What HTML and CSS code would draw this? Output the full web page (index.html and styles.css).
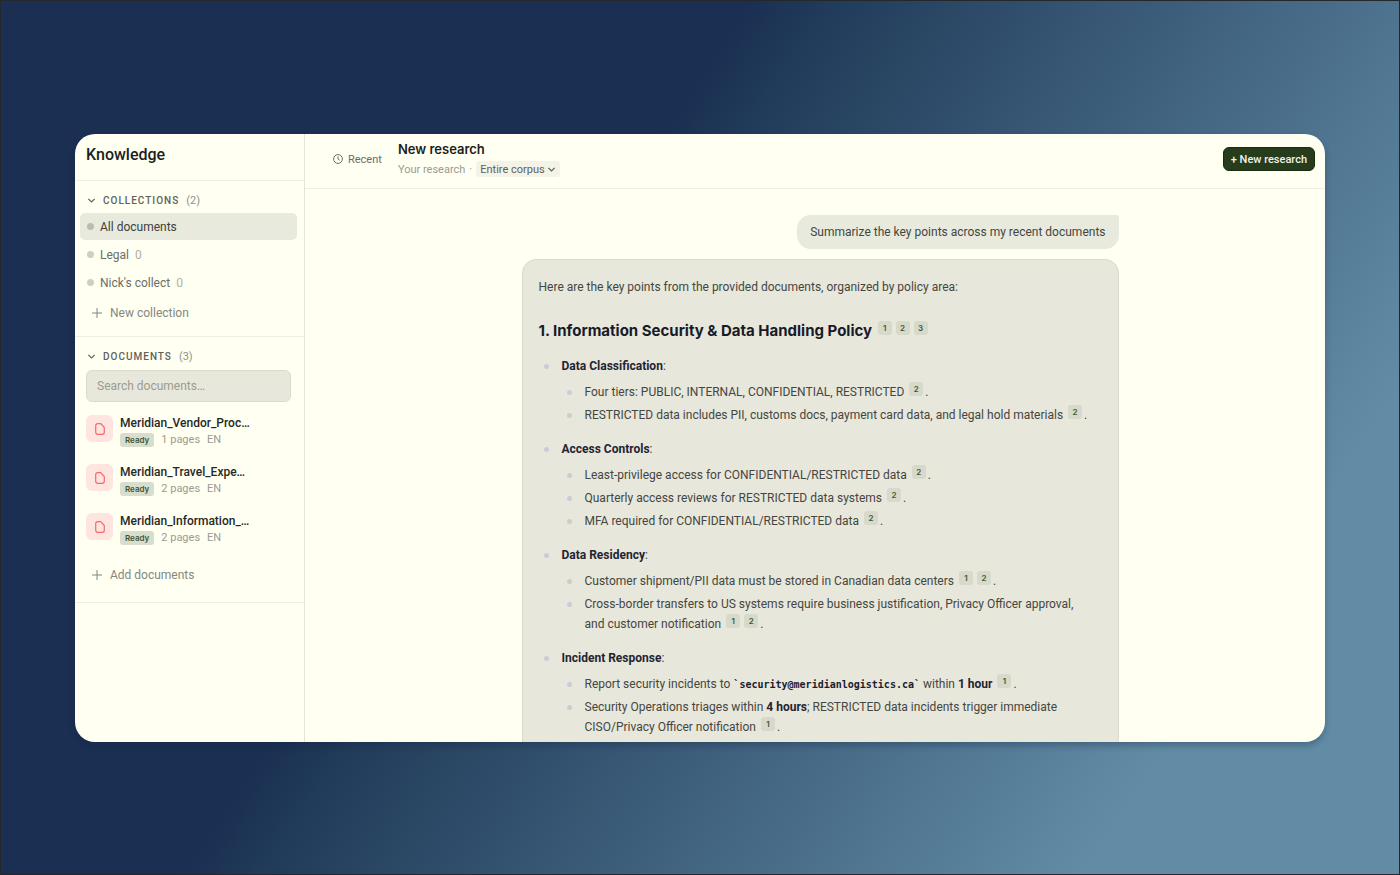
FILE: index.html
```html
<!DOCTYPE html>
<html lang="en">
<head>
    <meta charset="UTF-8">
    <meta name="viewport" content="width=device-width, initial-scale=1.0">
    <title>Knowledge</title>
    <link rel="stylesheet" href="styles.css">
</head>
<body>
    <div class="window">
        <aside class="sidebar">
            <div class="sidebar-header">
                <h1>Knowledge</h1>
            </div>

            <section class="section">
                <button class="section-toggle">
                    <svg class="chevron" viewBox="0 0 10 10"><path d="M1.5 3.2 5 6.7l3.5-3.5"/></svg>
                    <span class="section-title">COLLECTIONS</span>
                    <span class="section-count">(2)</span>
                </button>
                <nav class="collections">
                    <a href="#" class="collection active"><span class="dot"></span>All documents</a>
                    <a href="#" class="collection"><span class="dot"></span>Legal <span class="count">0</span></a>
                    <a href="#" class="collection"><span class="dot"></span>Nick's collect <span class="count">0</span></a>
                </nav>
                <button class="add-button">
                    <svg class="plus" viewBox="0 0 10 10"><path d="M5 0v10M0 5h10"/></svg>
                    New collection
                </button>
            </section>

            <section class="section">
                <button class="section-toggle">
                    <svg class="chevron" viewBox="0 0 10 10"><path d="M1.5 3.2 5 6.7l3.5-3.5"/></svg>
                    <span class="section-title">DOCUMENTS</span>
                    <span class="section-count">(3)</span>
                </button>
                <input class="search" type="text" placeholder="Search documents…" aria-label="Search documents">
                <ul class="documents">
                    <li class="document">
                        <span class="doc-icon"><svg viewBox="0 0 10 12"><path d="M2.7.7h3l3.6 3.8v4.8a2 2 0 0 1-2 2H2.7a2 2 0 0 1-2-2V2.7a2 2 0 0 1 2-2z"/></svg></span>
                        <div class="doc-info">
                            <div class="doc-name">Meridian_Vendor_Proc…</div>
                            <div class="doc-meta"><span class="ready">Ready</span><span>1 pages</span><span>EN</span></div>
                        </div>
                    </li>
                    <li class="document">
                        <span class="doc-icon"><svg viewBox="0 0 10 12"><path d="M2.7.7h3l3.6 3.8v4.8a2 2 0 0 1-2 2H2.7a2 2 0 0 1-2-2V2.7a2 2 0 0 1 2-2z"/></svg></span>
                        <div class="doc-info">
                            <div class="doc-name">Meridian_Travel_Expe…</div>
                            <div class="doc-meta"><span class="ready">Ready</span><span>2 pages</span><span>EN</span></div>
                        </div>
                    </li>
                    <li class="document">
                        <span class="doc-icon"><svg viewBox="0 0 10 12"><path d="M2.7.7h3l3.6 3.8v4.8a2 2 0 0 1-2 2H2.7a2 2 0 0 1-2-2V2.7a2 2 0 0 1 2-2z"/></svg></span>
                        <div class="doc-info">
                            <div class="doc-name">Meridian_Information_…</div>
                            <div class="doc-meta"><span class="ready">Ready</span><span>2 pages</span><span>EN</span></div>
                        </div>
                    </li>
                </ul>
                <button class="add-button">
                    <svg class="plus" viewBox="0 0 10 10"><path d="M5 0v10M0 5h10"/></svg>
                    Add documents
                </button>
            </section>
        </aside>

        <main class="main">
            <header class="topbar">
                <button class="recent">
                    <svg viewBox="0 0 10 10"><circle cx="5" cy="5" r="4.4"/><path d="M5 2.4V5l1.6 1.2"/></svg>
                    Recent
                </button>
                <div class="heading">
                    <h2>New research</h2>
                    <div class="scope">
                        <span>Your research</span>
                        <span>·</span>
                        <span class="scope-select">
                            <select aria-label="Research scope">
                                <option>Entire corpus</option>
                            </select>
                            <svg class="chevron" viewBox="0 0 10 10"><path d="M1.5 3.2 5 6.7l3.5-3.5"/></svg>
                        </span>
                    </div>
                </div>
                <button class="new-research">+ New research</button>
            </header>

            <div class="chat">
                <div class="thread">
                    <div class="question">Summarize the key points across my recent documents</div>
                    <article class="answer">
                        <p>Here are the key points from the provided documents, organized by policy area:</p>
                        <h3>1. Information Security &amp; Data Handling Policy <button class="cite">1</button><button class="cite">2</button><button class="cite">3</button></h3>
                        <ul class="points">
                            <li><strong>Data Classification</strong>:
                                <ul>
                                    <li>Four tiers: PUBLIC, INTERNAL, CONFIDENTIAL, RESTRICTED <button class="cite">2</button>.</li>
                                    <li>RESTRICTED data includes PII, customs docs, payment card data, and legal hold materials <button class="cite">2</button>.</li>
                                </ul>
                            </li>
                            <li><strong>Access Controls</strong>:
                                <ul>
                                    <li>Least-privilege access for CONFIDENTIAL/RESTRICTED data <button class="cite">2</button>.</li>
                                    <li>Quarterly access reviews for RESTRICTED data systems <button class="cite">2</button>.</li>
                                    <li>MFA required for CONFIDENTIAL/RESTRICTED data <button class="cite">2</button>.</li>
                                </ul>
                            </li>
                            <li><strong>Data Residency</strong>:
                                <ul>
                                    <li>Customer shipment/PII data must be stored in Canadian data centers <button class="cite">1</button><button class="cite">2</button>.</li>
                                    <li>Cross-border transfers to US systems require business justification, Privacy Officer approval, and customer notification <button class="cite">1</button><button class="cite">2</button>.</li>
                                </ul>
                            </li>
                            <li><strong>Incident Response</strong>:
                                <ul>
                                    <li>Report security incidents to <code>`security@meridianlogistics.ca`</code> within <strong>1 hour</strong> <button class="cite">1</button>.</li>
                                    <li>Security Operations triages within <strong>4 hours</strong>; RESTRICTED data incidents trigger immediate CISO/Privacy Officer notification <button class="cite">1</button>.</li>
                                </ul>
                            </li>
                        </ul>
                    </article>
                </div>
            </div>
        </main>
    </div>
</body>
</html>
```
FILE: styles.css
```css
* {
    box-sizing: border-box;
}
body {
    margin: 0;
    height: 100vh;
    padding: 133px 74px 132px;
    border: 1px solid #24282c;
    background: linear-gradient(123deg, #1a2f52 0%, #1a2f52 38%, #223d5b 43%, #628ca6 84%, #628ca6 100%);
    font-family: Roboto, "Liberation Sans", sans-serif;
    font-size: 12px;
    color: #444641;
}
h1, h2, h3, p, ul {
    margin: 0;
    padding: 0;
}
ul {
    list-style: none;
}
button, input, select {
    font: inherit;
    color: inherit;
    border: none;
    background: none;
    padding: 0;
}
button, select {
    cursor: pointer;
}
svg {
    fill: none;
    stroke: currentColor;
    flex-shrink: 0;
}
.window {
    display: flex;
    height: 100%;
    overflow: hidden;
    background: #fffff2;
    border-radius: 20px;
    box-shadow: 0 4px 6px rgba(20, 35, 60, 0.3);
}

/* Sidebar */
.sidebar {
    width: 230px;
    flex-shrink: 0;
    border-right: 1px solid #e4e5d9;
}
.sidebar-header {
    height: 47px;
    padding: 11px;
    border-bottom: 1px solid #eeeee2;
}
h1 {
    font-size: 16px;
    line-height: 20px;
    font-weight: 500;
    color: #1c1e1b;
}
.section {
    padding: 11px 7px 12px 5px;
    border-bottom: 1px solid #eeeee2;
}
.section:last-child {
    padding-bottom: 16px;
}
.section-toggle {
    display: flex;
    align-items: center;
    gap: 7px;
    height: 16px;
    padding: 0 7px;
    font-size: 10px;
    color: #5f625b;
}
.section-title {
    font-weight: 500;
    letter-spacing: 1px;
}
.section-count {
    color: #90938a;
    font-size: 11px;
}
.chevron {
    width: 9px;
    height: 9px;
    stroke-width: 1.3;
}
.collections {
    display: grid;
    gap: 1px;
    margin-top: 5px;
}
.collection {
    display: flex;
    align-items: center;
    gap: 6px;
    height: 27px;
    padding: 0 7px;
    border-radius: 5px;
    color: #6b6e67;
    text-decoration: none;
}
.collection.active {
    background: #e8eadd;
    color: #3c3f3a;
}
.dot {
    width: 7px;
    height: 7px;
    border-radius: 50%;
    background: #cdcfc4;
}
.active .dot {
    background: #b9bcb0;
}
.count {
    color: #adafa5;
}
.add-button {
    display: flex;
    align-items: center;
    gap: 8px;
    height: 22px;
    margin-top: 6px;
    padding: 0 12px;
    color: #85887f;
}
.plus {
    width: 10px;
    height: 10px;
    stroke-width: 1;
}
.search {
    display: block;
    width: calc(100% - 12px);
    height: 32px;
    margin: 6px 6px 0;
    padding: 0 10px;
    border: 1px solid #dadbcd;
    border-radius: 6px;
    background: #e8e7db;
}
.search::placeholder {
    color: #9a9c92;
}
.documents {
    display: grid;
    gap: 17px;
    margin: 13px 6px 19px;
}
.document {
    display: flex;
    gap: 7px;
}
.doc-icon {
    display: flex;
    align-items: center;
    justify-content: center;
    width: 27px;
    height: 27px;
    border-radius: 6px;
    background: #fee5df;
    color: #f9686d;
}
.doc-icon svg {
    width: 10px;
    height: 12px;
    stroke-width: 1.2;
}
.doc-name {
    line-height: 17px;
    font-weight: 500;
    color: #272926;
}
.doc-meta {
    display: flex;
    align-items: center;
    gap: 7px;
    height: 15px;
    font-size: 11px;
    color: #999c92;
}
.ready {
    padding: 0 5px;
    border-radius: 3px;
    background: #d9ddcd;
    color: #3b5737;
    font-family: Inter, sans-serif;
    font-size: 8px;
    line-height: 14px;
    font-weight: 600;
}

/* Main column */
.main {
    display: flex;
    flex-direction: column;
    flex: 1;
    min-width: 0;
}
.topbar {
    display: flex;
    align-items: center;
    gap: 16px;
    height: 55px;
    flex-shrink: 0;
    padding: 0 10px 4px 28px;
    border-bottom: 1px solid #eeeee2;
}
.recent {
    display: flex;
    align-items: center;
    gap: 5px;
    font-size: 11px;
    color: #6b6e67;
}
.recent svg {
    width: 10px;
    height: 10px;
}
h2 {
    font-family: Inter, sans-serif;
    font-size: 13px;
    line-height: 20px;
    font-weight: 600;
    color: #1c1e1b;
}
.scope {
    display: flex;
    align-items: center;
    gap: 4px;
    height: 20px;
    font-size: 11px;
    color: #999c92;
}
.scope-select {
    position: relative;
    display: flex;
    color: #5f625b;
}
.scope-select select {
    appearance: none;
    height: 16px;
    padding: 0 15px 0 4px;
    border-radius: 3px;
    background: #f3f3e7;
}
.scope-select .chevron {
    position: absolute;
    right: 4px;
    top: 4px;
    pointer-events: none;
}
.new-research {
    height: 24px;
    margin-left: auto;
    padding: 0 7px;
    border: 1px solid #142e0e;
    border-radius: 6px;
    background: #263c1d;
    color: #f1f3e8;
    font-size: 11px;
    font-weight: 500;
}
.chat {
    flex: 1;
    min-height: 0;
    overflow: hidden;
    padding: 26px 16px 0 26px;
}
.thread {
    display: flex;
    flex-direction: column;
    gap: 10px;
    max-width: 597px;
    margin: 0 auto;
    line-height: 20px;
}
.question {
    align-self: flex-end;
    padding: 7px 13px;
    border-radius: 14px 3px 14px 14px;
    background: #e8eadd;
}
.answer {
    padding: 17px 26px 17px 16px;
    border: 1px solid #d9dacd;
    border-radius: 14px;
    background: #e8e7db;
}
h3 {
    margin: 23px 0 14px;
    font-family: Inter, sans-serif;
    font-size: 15px;
    line-height: 22px;
    font-weight: 700;
    color: #161b29;
}
.answer strong {
    font-weight: 700;
    color: #1f2433;
}
.answer li {
    position: relative;
    padding-left: 23px;
}
.answer li::before {
    content: "";
    position: absolute;
    left: 5px;
    top: 8px;
    width: 5px;
    height: 5px;
    border-radius: 50%;
    background: #c8cdd8;
}
.points {
    display: grid;
    gap: 14px;
}
.points ul {
    display: grid;
    gap: 3px;
    margin-top: 6px;
}
.cite {
    height: 14px;
    min-width: 14px;
    margin: -4px 2px;
    border-radius: 3px;
    background: #d7d9ca;
    color: #3b5737;
    font-family: Inter, sans-serif;
    font-size: 8px;
    line-height: 14px;
    font-weight: 600;
    vertical-align: 4px;
}
h3 .cite {
    vertical-align: 5px;
}
code {
    font-family: "DejaVu Sans Mono", monospace;
    font-size: 10px;
    line-height: 10px;
    font-weight: 700;
    color: #1b2030;
}
```
